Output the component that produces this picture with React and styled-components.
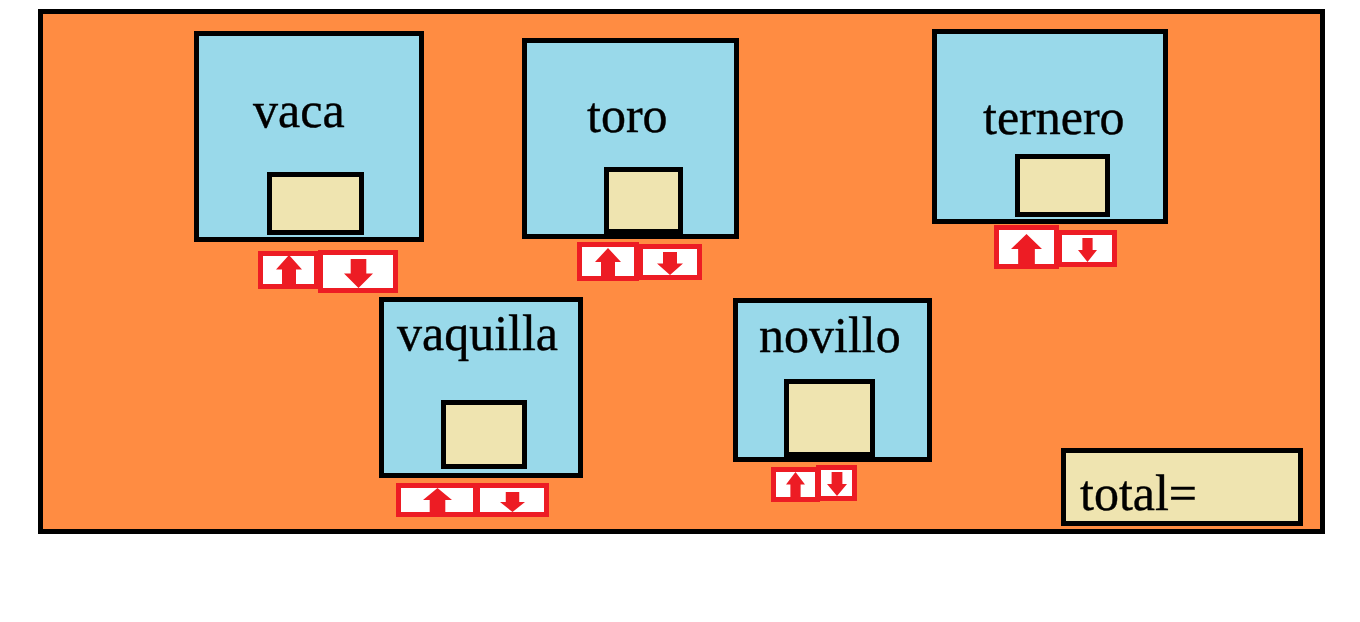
import React from 'react';
import styled, { createGlobalStyle } from 'styled-components';

const GlobalStyle = createGlobalStyle`
  body {
    margin: 0;
    background: #ffffff;
    font-family: "Liberation Serif", "Times New Roman", serif;
  }
`;

const Frame = styled.div`
  box-sizing: border-box;
  width: 1287px;
  height: 525px;
  margin: 9px 0 0 38px;
  border: 5px solid #000;
  background: #ff8c42;
  display: flex;
  flex-direction: column;
`;

const Row = styled.div`
  display: flex;
  align-items: flex-start;
  height: ${(p) => (p.$height ? `${p.$height}px` : 'auto')};
  flex-shrink: 0;
`;

const Unit = styled.div`
  display: flex;
  flex-direction: column;
  margin-left: ${(p) => p.$x}px;
  margin-top: ${(p) => p.$y}px;
`;

const Card = styled.div`
  box-sizing: border-box;
  width: ${(p) => p.$w}px;
  height: ${(p) => p.$h}px;
  border: 5px solid #000;
  background: #99d9ea;
  display: flex;
  flex-direction: column;
  align-items: flex-start;
`;

const Title = styled.div`
  font-size: 50px;
  line-height: 1;
  color: #000;
  -webkit-text-stroke: 0.4px #000;
  white-space: nowrap;
  margin-top: ${(p) => p.$top}px;
  margin-left: ${(p) => p.$left}px;
`;

const Slot = styled.div`
  box-sizing: border-box;
  width: ${(p) => p.$w}px;
  height: ${(p) => p.$h}px;
  margin-top: auto;
  margin-left: ${(p) => p.$left}px;
  margin-bottom: ${(p) => p.$bottom}px;
  border: 5px solid #000;
  background: #efe4b0;
`;

const Buttons = styled.div`
  display: flex;
  align-items: flex-start;
  margin-left: ${(p) => p.$x}px;
  margin-top: ${(p) => p.$y}px;
`;

const ArrowButton = styled.div`
  box-sizing: border-box;
  width: ${(p) => p.$w}px;
  height: ${(p) => p.$h}px;
  margin-top: ${(p) => p.$top || 0}px;
  margin-left: ${(p) => p.$left || 0}px;
  border: 5px solid #ed1c24;
  background: #ffffff;
  display: flex;
  justify-content: center;
  align-items: flex-end;
`;

const Total = styled.div`
  box-sizing: border-box;
  width: 242px;
  height: 78px;
  margin-left: 129px;
  margin-top: 151px;
  border: 5px solid #000;
  background: #efe4b0;
`;

// chunky paint-style block arrows
const Arrow = ({ dir, w, h }) => (
  <svg width={w} height={h} viewBox="0 0 26 30" preserveAspectRatio="none">
    <polygon
      fill="#ed1c24"
      points={
        dir === 'up'
          ? '13,0 26,15 20,15 20,30 6,30 6,15 0,15'
          : '6,0 20,0 20,15 26,15 13,30 0,15 6,15'
      }
    />
  </svg>
);

const animals = [
  {
    name: 'vaca', x: 151, y: 17, w: 230, h: 211,
    title: { top: 49, left: 54 },
    slot: { w: 97, h: 63, left: 68, bottom: 2 },
    buttons: { x: 64, y: 8 },
    up: { w: 61, h: 38, top: 1, aw: 26, ah: 29 },
    down: { w: 80, h: 43, top: 0, left: -1, aw: 29, ah: 29 },
  },
  {
    name: 'toro', x: 98, y: 24, w: 217, h: 201,
    title: { top: 47, left: 60 },
    slot: { w: 79, h: 67, left: 77, bottom: 0 },
    buttons: { x: 55, y: 3 },
    up: { w: 62, h: 39, top: 0, aw: 26, ah: 28 },
    down: { w: 64, h: 36, top: 2, left: -1, aw: 26, ah: 23 },
  },
  {
    name: 'ternero', x: 193, y: 15, w: 236, h: 195,
    title: { top: 58, left: 46 },
    slot: { w: 95, h: 63, left: 78, bottom: 2 },
    buttons: { x: 62, y: 1 },
    up: { w: 65, h: 44, top: 0, aw: 31, ah: 30 },
    down: { w: 60, h: 37, top: 5, left: -2, aw: 19, ah: 24 },
  },
];

const secondRow = [
  {
    name: 'vaquilla', x: 336, y: 0, w: 204, h: 181,
    title: { top: 6, left: 13 },
    slot: { w: 86, h: 69, left: 57, bottom: 4 },
    buttons: { x: 17, y: 5 },
    up: { w: 82, h: 34, top: 0, aw: 29, ah: 24 },
    down: { w: 74, h: 34, top: 0, left: -3, aw: 25, ah: 20 },
  },
  {
    name: 'novillo', x: 150, y: 1, w: 199, h: 164,
    title: { top: 7, left: 21 },
    slot: { w: 91, h: 78, left: 46, bottom: 0 },
    buttons: { x: 38, y: 3 },
    up: { w: 49, h: 35, top: 2, aw: 19, ah: 25 },
    down: { w: 41, h: 36, top: 0, left: -4, aw: 20, ah: 24 },
  },
];

const AnimalCard = ({ a }) => (
  <Unit $x={a.x} $y={a.y}>
    <Card $w={a.w} $h={a.h}>
      <Title $top={a.title.top} $left={a.title.left}>{a.name}</Title>
      <Slot $w={a.slot.w} $h={a.slot.h} $left={a.slot.left} $bottom={a.slot.bottom} />
    </Card>
    <Buttons $x={a.buttons.x} $y={a.buttons.y}>
      <ArrowButton $w={a.up.w} $h={a.up.h} $top={a.up.top}>
        <Arrow dir="up" w={a.up.aw} h={a.up.ah} />
      </ArrowButton>
      <ArrowButton $w={a.down.w} $h={a.down.h} $top={a.down.top} $left={a.down.left}>
        <Arrow dir="down" w={a.down.aw} h={a.down.ah} />
      </ArrowButton>
    </Buttons>
  </Unit>
);

const App = () => (
  <>
    <GlobalStyle />
    <Frame>
      <Row $height={283}>
        {animals.map((a) => (
          <AnimalCard key={a.name} a={a} />
        ))}
      </Row>
      <Row>
        {secondRow.map((a) => (
          <AnimalCard key={a.name} a={a} />
        ))}
        <Total>
          <Title $top={15} $left={14}>total=</Title>
        </Total>
      </Row>
    </Frame>
  </>
);

export default App;
